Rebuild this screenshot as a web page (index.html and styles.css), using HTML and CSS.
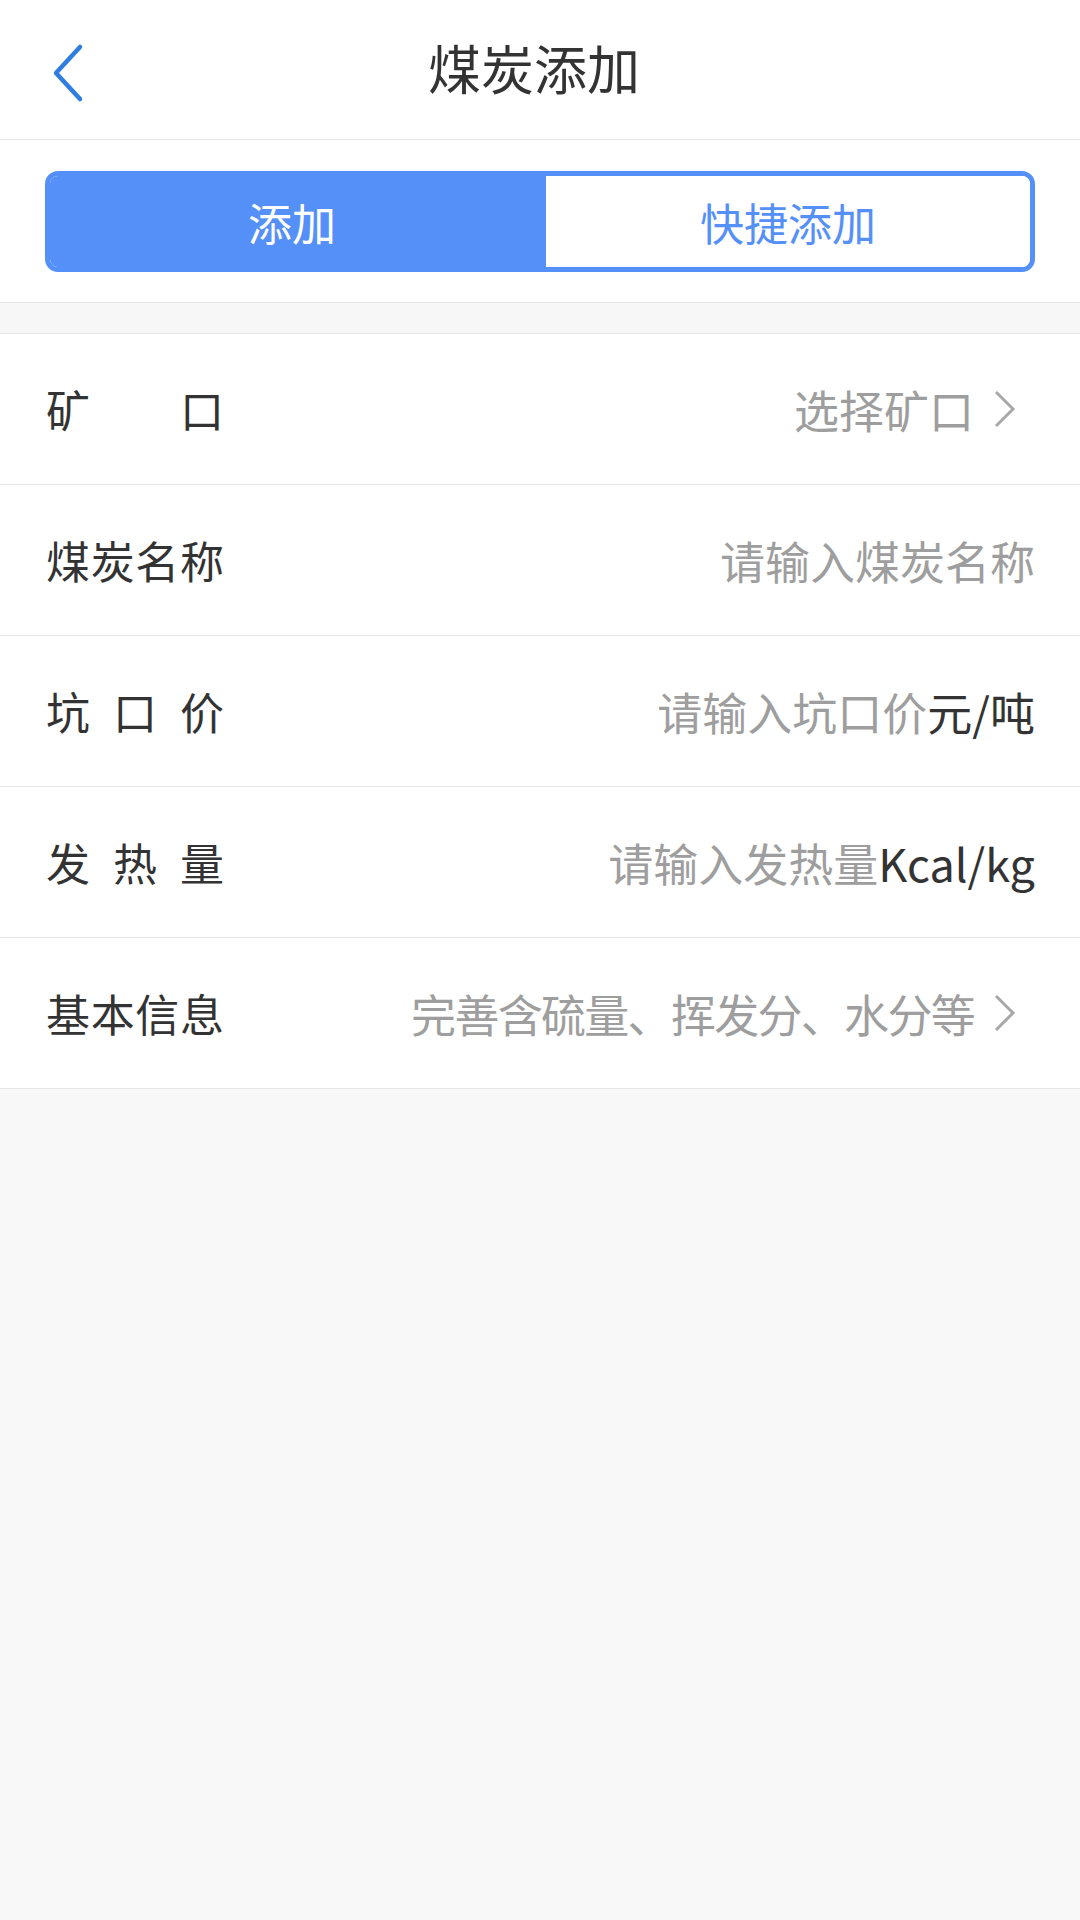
FILE: index.html
```html
<!DOCTYPE html>
<html lang="zh-CN">
<head>
    <meta charset="UTF-8">
    <meta name="viewport" content="width=device-width, initial-scale=1.0">
    <title>煤炭添加</title>
    <link rel="stylesheet" href="styles.css">
</head>
<body>
    <!-- 顶部导航 -->
    <div class="header">
        <span class="back">
            <svg width="34" height="60" viewBox="0 0 34 60"><polyline points="28,4 4,30 28,56" fill="none" stroke="#2f7de1" stroke-width="4.5" stroke-linecap="round" stroke-linejoin="round"/></svg>
        </span>
        <h1 class="title">煤炭添加</h1>
    </div>

    <!-- 切换 -->
    <div class="tabs-wrap">
        <div class="tabs">
            <div class="tab current">添加</div>
            <div class="tab">快捷添加</div>
        </div>
    </div>

    <div class="gap"></div>

    <!-- 表单 -->
    <ul class="form">
        <li class="row">
            <span class="label">矿 口</span>
            <span class="value"><span class="holder">选择矿口</span><svg class="more" width="22" height="38" viewBox="0 0 22 38"><polyline points="2,2 19,19 2,36" fill="none" stroke="#a8a8a8" stroke-width="3"/></svg></span>
        </li>
        <li class="row">
            <span class="label">煤炭名称</span>
            <span class="value"><span class="holder">请输入煤炭名称</span></span>
        </li>
        <li class="row">
            <span class="label">坑 口 价</span>
            <span class="value"><span class="holder">请输入坑口价</span><span class="unit">元/吨</span></span>
        </li>
        <li class="row">
            <span class="label">发 热 量</span>
            <span class="value"><span class="holder">请输入发热量</span><span class="unit">Kcal/kg</span></span>
        </li>
        <li class="row">
            <span class="label">基本信息</span>
            <span class="value"><span class="holder tight">完善含硫量、挥发分、水分等</span><svg class="more" width="22" height="38" viewBox="0 0 22 38"><polyline points="2,2 19,19 2,36" fill="none" stroke="#a8a8a8" stroke-width="3"/></svg></span>
        </li>
    </ul>
</body>
</html>
```

FILE: styles.css
```css
*{
    margin: 0;
    padding: 0;
    border: 0;
    list-style: none;
    box-sizing: border-box;
}
html, body{
    height: 100%;
}
body{
    background: #f8f8f8;
    font-family: "Noto Sans CJK SC", "Noto Sans", sans-serif;
    color: #333;
}
.header{
    height: 140px;
    background: #fff;
    border-bottom: 1px solid #e6e6e6;
    display: flex;
    align-items: center;
    justify-content: center;
    position: relative;
}
.back{
    position: absolute;
    left: 52px;
    top: 43px;
    display: flex;
}
.title{
    font-size: 53px;
    font-weight: normal;
    color: #333;
    line-height: 1;
    margin: -4px 12px 0 0;
}
.tabs-wrap{
    background: #fff;
    padding: 31px 45px 30px;
    border-bottom: 1px solid #e6e6e6;
}
.tabs{
    display: flex;
    height: 101px;
    border: 5px solid #5590f8;
    border-radius: 13px;
    overflow: hidden;
}
.tab{
    flex: 1;
    display: flex;
    align-items: center;
    justify-content: center;
    font-size: 44px;
    color: #5590f8;
    background: #fff;
}
.tab.current{
    flex: 0 0 496px;
    padding-right: 12px;
    background: #5590f8;
    color: #fff;
}
.gap{
    height: 31px;
    background: #f7f7f7;
    border-bottom: 1px solid #e6e6e6;
}
.form{
    background: #fff;
}
.row{
    height: 151px;
    padding: 0 45px 0 46px;
    border-bottom: 1px solid #e6e6e6;
    display: flex;
    align-items: center;
    justify-content: space-between;
    font-size: 45px;
}
.label{
    width: 178px;
    font-size: 44px;
    text-align: justify;
    text-align-last: justify;
    color: #333;
    white-space: nowrap;
}
.value{
    display: flex;
    align-items: center;
    white-space: nowrap;
}
.holder{
    color: #9e9e9e;
}
.holder.tight{
    letter-spacing: -1.7px;
}
.unit{
    color: #333;
}
.more{
    display: block;
    margin: 0 19px 0 20px;
}
```
